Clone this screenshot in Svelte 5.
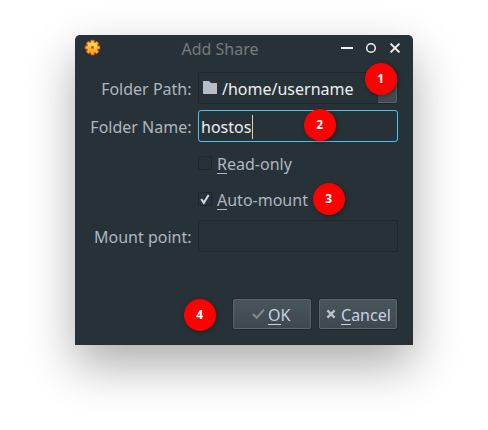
<script>
  let path = $state('/home/username');
  let name = $state('hostos');
  let readOnly = $state(false);
  let autoMount = $state(true);
  const teeth = [0, 45, 90, 135, 180, 225, 270, 315];
  const markers = [
    { n: 1, x: 289.6, y: 28.4 },
    { n: 2, x: 228.6, y: 74.4 },
    { n: 3, x: 237.6, y: 148.4 },
    { n: 4, x: 108.6, y: 264.4 }
  ];
</script>

<main>
  <section class="window">
    <header>
      <svg class="gear" width="17" height="17" viewBox="0 0 17 17">
        <defs>
          <linearGradient id="gold" x1="0" y1="0" x2="0" y2="1">
            <stop offset="0" stop-color="#ffe868" />
            <stop offset="1" stop-color="#ff9c1c" />
          </linearGradient>
        </defs>
        <circle cx="8.5" cy="8.5" r="6.6" fill="#b8380c" />
        {#each teeth as a}
          <rect x="6.5" y="0.8" width="4" height="5" rx=".8" fill="#e2600c" transform="rotate({a} 8.5 8.5)" />
        {/each}
        {#each teeth as a}
          <rect x="7.4" y="1.7" width="2.2" height="5" rx=".5" fill="#ffbd38" transform="rotate({a} 8.5 8.5)" />
        {/each}
        <circle cx="8.5" cy="8.5" r="5.2" fill="url(#gold)" />
        <rect x="7.3" y="7.3" width="2.4" height="2.4" fill="#8a3208" stroke="#e88418" stroke-width=".7" />
      </svg>
      <h1>Add Share</h1>
      <svg class="controls" width="64" height="16" viewBox="0 0 64 16" fill="none" stroke="#f0f2ee" stroke-width="2">
        <path d="M2 8H14" />
        <circle cx="32" cy="8" r="4.3" stroke-width="1.5" />
        <path d="M51.6 3.6L60.4 12.4M60.4 3.6L51.6 12.4" />
      </svg>
    </header>

    <div class="form">
      <div class="row path">
        <span class="label">Folder Path:</span>
        <div class="field combo">
          <svg width="14" height="14" viewBox="0 0 14 14"><path d="M0 0H6L8 2H14V13H0Z" fill="#b8bbc8" /></svg>
          <span>{path}</span>
          <i class="drop"></i>
        </div>
      </div>
      <div class="row name">
        <span class="label">Folder Name:</span>
        <div class="field focused"><span>{name}</span><i class="caret"></i></div>
      </div>
      <div class="row check">
        <i class="box">{#if readOnly}<svg width="12" height="12"></svg>{/if}</i>
        <span><span class="key">R</span>ead-only</span>
      </div>
      <div class="row check auto">
        <i class="box">
          {#if autoMount}
            <svg width="12" height="12" viewBox="0 0 12 12"><path d="M2.2 6L4.8 9.8L9.6 2" fill="none" stroke="#d5dadc" stroke-width="2" /></svg>
          {/if}
        </i>
        <span><span class="key">A</span>uto-mount</span>
      </div>
      <div class="row mount">
        <span class="label">Mount point:</span>
        <div class="field"></div>
      </div>
    </div>

    <footer>
      <div class="button ok">
        <svg width="13" height="12" viewBox="0 0 13 12"><path d="M1 6L4.6 9.8L12 1.7" fill="none" stroke="#868a8c" stroke-width="2" /></svg>
        <span><span class="key">O</span>K</span>
      </div>
      <div class="button cancel">
        <svg width="10" height="10" viewBox="0 0 10 10"><path d="M1.4 1.4L8.6 8.6M8.6 1.4L1.4 8.6" stroke="#bfc2c6" stroke-width="2.2" /></svg>
        <span><span class="key">C</span>ancel</span>
      </div>
    </footer>

    {#each markers as m}
      <b class="marker" style="left:{m.x}px;top:{m.y}px">{m.n}</b>
    {/each}
  </section>
</main>

<style>
  :global(body) { background: #fff; }
  main {
    box-sizing: border-box;
    width: 488px;
    height: 430px;
    padding: 35px 0 0 75px;
    overflow: hidden;
    font: 16px/22px "Noto Sans", sans-serif;
    color: #b1b5bf;
  }
  .window {
    position: relative;
    width: 338px;
    height: 310px;
    background: #273238;
    border-radius: 5px 5px 0 0;
    box-shadow: 0 20px 48px rgba(0, 0, 0, .33);
  }
  header { display: flex; height: 37px; padding: 0 6px 0 9px; align-items: flex-start; }
  .gear { margin-top: 4px; }
  h1 { flex: 1; margin: 3px 0 0; font-size: 16px; font-weight: 400; line-height: 22px; text-align: center; color: #777a7b; }
  .controls { margin: 5px 4px 0 0; }
  .form { height: 227px; }
  .row { display: flex; gap: 6px; height: 32px; align-items: center; }
  .label { width: 117px; box-sizing: border-box; padding: 1px .5px 0 0; text-align: right; white-space: nowrap; }
  .name { margin-top: 6px; }
  .field {
    box-sizing: border-box;
    display: flex;
    align-items: center;
    width: 200px;
    height: 32px;
    border: 1px solid #1e262b;
    border-radius: 3px;
    color: #eceff1;
    padding: 1px 0 0 2px;
  }
  .focused { border-color: #45c8f0; }
  .caret { width: 1px; height: 24px; background: #dccfc0; margin-left: 1px; }
  .combo { padding: 0 0 0 4px; }
  .combo svg { margin: 0 5px 0 0; }
  .combo span { padding-top: 1px; }
  .drop { margin-left: auto; width: 19px; height: 30px; background: linear-gradient(#475359, #3f4a50); box-shadow: inset -1px -1px #59646a; border-radius: 0 2px 2px 0; }
  .check { height: 22px; padding-left: 123px; margin-top: 11px; gap: 5px; }
  .auto { margin-top: 14px; }
  .box { box-sizing: border-box; width: 14px; height: 14px; border: 1px solid #1e262b; border-radius: 1px; margin-bottom: 2px; }
  .box svg { display: block; }
  .mount { margin-top: 9px; }
  .key { background: linear-gradient(currentColor, currentColor) 0 20px / 100% 1px no-repeat; }
  footer { display: flex; justify-content: flex-end; gap: 8px; padding-right: 16px; }
  .button {
    box-sizing: border-box;
    display: flex;
    align-items: center;
    width: 78px;
    height: 30px;
    border: 1px solid #59666d;
    border-radius: 2px;
    background: linear-gradient(#48555b, #3e494f);
    box-shadow: 0 0 0 1px #20292e;
    color: #c7d0e6;
  }
  .ok { padding-left: 18px; gap: 3px; }
  .cancel { padding-left: 6px; gap: 5px; }
  .button svg { margin-bottom: 1px; }
  .button > span { padding-top: 1px; }
  .marker {
    position: absolute;
    width: 32px;
    height: 32px;
    border-radius: 50%;
    background: #f00;
    color: #fff;
    font-size: 12px;
    line-height: 32px;
    text-align: center;
    box-shadow: 1px 1px 4px rgba(0, 0, 0, .4);
  }
</style>
